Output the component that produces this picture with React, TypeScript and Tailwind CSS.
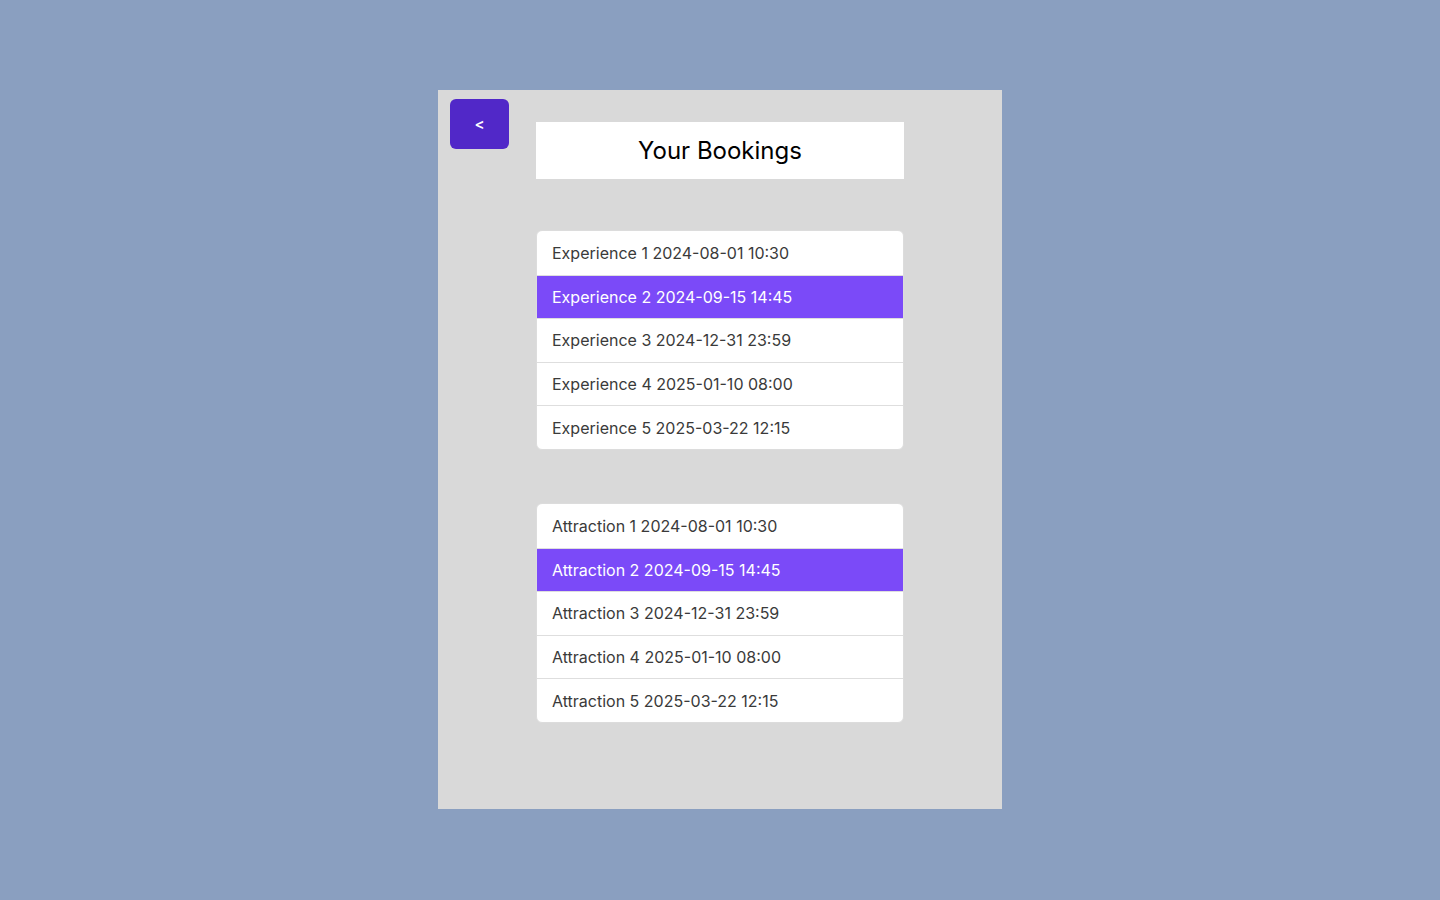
import React, { useState } from 'react';

const experiences = [
  'Experience 1 2024-08-01 10:30',
  'Experience 2 2024-09-15 14:45',
  'Experience 3 2024-12-31 23:59',
  'Experience 4 2025-01-10 08:00',
  'Experience 5 2025-03-22 12:15',
];

const attractions = [
  'Attraction 1 2024-08-01 10:30',
  'Attraction 2 2024-09-15 14:45',
  'Attraction 3 2024-12-31 23:59',
  'Attraction 4 2025-01-10 08:00',
  'Attraction 5 2025-03-22 12:15',
];

const BookingList = ({ items }: { items: string[] }) => {
  const [active, setActive] = useState(1);
  return (
    <ul className="w-[368px] bg-white border border-[#dcdcdc] rounded-[6px] overflow-hidden">
      {items.map((item, i) => (
        <li
          key={item}
          onClick={() => setActive(i)}
          className={`h-[43.6px] flex items-center px-[15px] text-[16px] cursor-pointer ${
            i > 0 ? 'border-t border-[#dedede]' : ''
          } ${i === active ? 'bg-[#7b4af8] text-white border-[#7b4af8]' : 'text-[#3a3a3a]'}`}
        >
          {item}
        </li>
      ))}
    </ul>
  );
};

export default function App() {
  return (
    <div
      className="min-h-screen w-full bg-[#8a9fc0] flex justify-center pt-[90px]"
      style={{ fontFamily: 'Inter, "Noto Sans", sans-serif' }}
    >
      <div className="relative w-[564px] h-[719px] bg-[#d9d9d9] flex flex-col items-center pt-[32px]">
        {/* Back button */}
        <button className="absolute left-[12px] top-[9px] w-[59px] h-[50px] rounded-[6px] bg-[#5128c8] text-white text-[15px] font-semibold flex items-center justify-center">
          &lt;
        </button>

        <div className="w-[368px] h-[57px] bg-white flex items-center justify-center">
          <h1 className="text-[24px] text-black">Your Bookings</h1>
        </div>

        <div className="mt-[51px]">
          <BookingList items={experiences} />
        </div>

        <div className="mt-[53px]">
          <BookingList items={attractions} />
        </div>
      </div>
    </div>
  );
}
